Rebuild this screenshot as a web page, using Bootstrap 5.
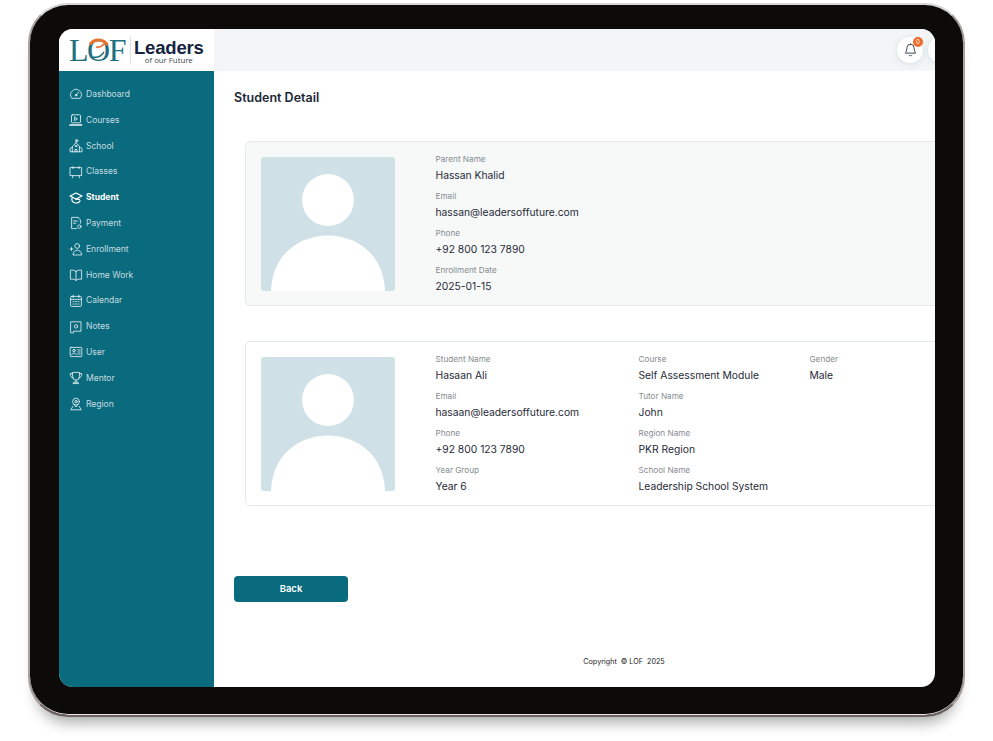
<!DOCTYPE html>
<html lang="en">
<head>
    <meta charset="UTF-8">
    <meta name="viewport" content="width=device-width, initial-scale=1.0">
    <title>Student Detail</title>
    <link rel="stylesheet" href="https://cdn.jsdelivr.net/npm/bootstrap@5.3.0/dist/css/bootstrap.min.css">
    <script defer src="https://cdn.jsdelivr.net/npm/bootstrap@5.3.0/dist/js/bootstrap.bundle.min.js"></script>
    <style>
        html, body { height: 100%; }
        body {
            background: #fff;
            font-family: Inter, "Liberation Sans", sans-serif;
            overflow: hidden;
        }
        .tablet {
            width: 937px;
            height: 714px;
            margin: 3px 0 0 28px;
            padding: 24px 28px 28px 29px;
            background: #0c0b09;
            border: 2px solid #a8a29e;
            border-top-color: #d6d6d6;
            border-bottom-color: #6f645f;
            border-radius: 40px;
            box-shadow: inset 0 -1px 0 #e9e6e4, 0 14px 14px -8px rgba(0, 0, 0, .32);
        }
        .screen {
            height: 658px;
            background: #fff;
            border-radius: 14px;
            overflow: hidden;
        }
        .brand-box { width: 155px; height: 42px; background: #fff; padding-left: 10px; }
        .top-strip { height: 42px; background: #f3f5f6; padding-right: 12px; overflow: hidden; }
        .lof-mark {
            font-family: "Liberation Serif", serif;
            font-size: 32px;
            line-height: 30px;
            color: #1f6f80;
            letter-spacing: -1.5px;
            width: 61px;
        }
        .lof-o { position: relative; display: inline-block; }
        .lof-o svg { position: absolute; left: 0; top: 0; width: 23px; height: 30px; }
        .brand-text { border-left: 1px solid #d9dee0; padding-left: 3px; height: 26px; }
        .brand-big { font-family: "Liberation Sans", sans-serif; font-size: 18.5px; line-height: 17px; font-weight: 700; color: #14233f; letter-spacing: -.2px; margin-top: 2px; }
        .brand-small { font-family: "Open Sans", sans-serif; font-size: 7.8px; line-height: 8px; color: #3b4650; text-align: center; }
        .bell-btn {
            position: relative;
            width: 26px;
            height: 26px;
            border-radius: 50%;
            background: #fff;
            box-shadow: 0 1px 6px rgba(10, 106, 126, .14);
        }
        .bell-dot {
            position: absolute;
            top: 0;
            right: 0;
            width: 10px;
            height: 10px;
            border-radius: 50%;
            background: #ee6c2b;
            color: #fff;
            font-size: 6px;
            line-height: 10px;
            text-align: center;
        }
        .avatar-edge {
            position: absolute;
            right: -19px;
            top: 8px;
            width: 26px;
            height: 26px;
            border-radius: 50%;
            background: #fff;
            box-shadow: 0 1px 6px rgba(10, 106, 126, .14);
        }
        .side-menu { width: 155px; height: 616px; background: #0a6a7e; padding-top: 10.5px; }
        .side-link {
            height: 25.8px;
            padding-left: 10px;
            gap: 3px;
            font-size: 8.5px;
            color: rgba(255, 255, 255, .78);
            text-decoration: none;
        }
        .side-link svg { width: 14px; height: 14px; flex: none; fill: none; stroke: rgba(255, 255, 255, .85); stroke-width: .9; stroke-linecap: round; stroke-linejoin: round; }
        .side-link.current { color: #fff; font-weight: 700; }
        .side-link.current svg { stroke: #fff; stroke-width: 1.2; }
        .main-pane { padding: 0 0 0 20px; min-width: 0; position: relative; }
        .page-title { font-size: 12.5px; line-height: 16px; font-weight: 600; color: #1c2735; margin: 19px 0 35px; }
        .info-card {
            width: 720px;
            height: 164.5px;
            margin: 0 0 35.5px 11px;
            padding: 14.5px 15px 15px 14.5px;
            border: 1px solid #e4e9ec;
            border-radius: 5px;
        }
        .info-card.tinted { background: #f7f9f9; }
        .photo { width: 134px; height: 134px; border-radius: 3px; background: #cfe1e6; overflow: hidden; flex: none; }
        .info-wrap { margin: -3.5px 0 0 41px; }
        .info-col-a { width: 203px; }
        .info-col-b { width: 171px; }
        .info-field { height: 37px; }
        .info-label { font-size: 8.2px; line-height: 13.5px; color: #858c91; }
        .info-value { font-size: 10.3px; line-height: 16px; color: #1f2a37; white-space: nowrap; }
        .back-btn {
            width: 114px;
            height: 26px;
            padding: 0;
            margin-top: 35px;
            background: #0a6a7e;
            border: 0;
            border-radius: 4px;
            color: #fff;
            font-size: 9.5px;
            font-weight: 600;
        }
        .copy-line {
            margin-top: 54px;
            padding-left: 79px;
            font-size: 7.2px;
            line-height: 12px;
            color: #222;
            text-align: center;
        }
    </style>
</head>
<body>
    <div class="tablet">
        <div class="screen">
            <div class="d-flex">
                <div class="brand-box d-flex align-items-center">
                    <div class="lof-mark">L<span class="lof-o">O<svg viewBox="0 0 23 30"><path d="M3 9.5A10.5 10.5 0 0 1 20.5 10" fill="none" stroke="#e8732f" stroke-width="3"/><path d="M9 12c3 .5 6-.5 8-3" fill="none" stroke="#e8732f" stroke-width="1.6"/><path d="M6 22c4 1 8-.5 11-5" fill="none" stroke="#1f6f80" stroke-width="1.4"/></svg></span>F</div>
                    <div class="brand-text">
                        <div class="brand-big">Leaders</div>
                        <div class="brand-small">of our Future</div>
                    </div>
                </div>
                <div class="top-strip flex-grow-1 d-flex align-items-center justify-content-end position-relative">
                    <div class="bell-btn d-flex align-items-center justify-content-center">
                        <svg width="13" height="14" viewBox="0 0 13 14" fill="none" stroke="#3d4852" stroke-width="1" stroke-linecap="round" stroke-linejoin="round"><path d="M6.5 1.2a3.6 3.6 0 0 0-3.6 3.6c0 3.4-1.2 4.6-1.7 5.3h10.6c-.5-.7-1.7-1.9-1.7-5.3a3.6 3.6 0 0 0-3.6-3.6Z"/><path d="M5.2 12.2c.5.9 2.1.9 2.6 0"/></svg>
                        <span class="bell-dot">0</span>
                    </div>
                    <div class="avatar-edge"></div>
                </div>
            </div>
            <div class="d-flex">
                <nav class="side-menu flex-shrink-0" id="sideMenu"></nav>
                <main class="main-pane flex-grow-1">
                    <h1 class="page-title">Student Detail</h1>

                    <div class="info-card tinted d-flex">
                        <svg class="photo" viewBox="0 0 134 134"><circle cx="67" cy="43" r="26" fill="#fff"/><path d="M10 134C12 60 122 60 124 134Z" fill="#fff"/></svg>
                        <div class="info-wrap">
                            <div class="info-field"><div class="info-label">Parent Name</div><div class="info-value">Hassan Khalid</div></div>
                            <div class="info-field"><div class="info-label">Email</div><div class="info-value">hassan@leadersoffuture.com</div></div>
                            <div class="info-field"><div class="info-label">Phone</div><div class="info-value">+92 800 123 7890</div></div>
                            <div class="info-field"><div class="info-label">Enrollment Date</div><div class="info-value">2025-01-15</div></div>
                        </div>
                    </div>

                    <div class="info-card d-flex">
                        <svg class="photo" viewBox="0 0 134 134"><circle cx="67" cy="43" r="26" fill="#fff"/><path d="M10 134C12 60 122 60 124 134Z" fill="#fff"/></svg>
                        <div class="info-wrap d-flex">
                            <div class="info-col-a">
                                <div class="info-field"><div class="info-label">Student Name</div><div class="info-value">Hasaan Ali</div></div>
                                <div class="info-field"><div class="info-label">Email</div><div class="info-value">hasaan@leadersoffuture.com</div></div>
                                <div class="info-field"><div class="info-label">Phone</div><div class="info-value">+92 800 123 7890</div></div>
                                <div class="info-field"><div class="info-label">Year Group</div><div class="info-value">Year 6</div></div>
                            </div>
                            <div class="info-col-b">
                                <div class="info-field"><div class="info-label">Course</div><div class="info-value">Self Assessment Module</div></div>
                                <div class="info-field"><div class="info-label">Tutor Name</div><div class="info-value">John</div></div>
                                <div class="info-field"><div class="info-label">Region Name</div><div class="info-value">PKR Region</div></div>
                                <div class="info-field"><div class="info-label">School Name</div><div class="info-value">Leadership School System</div></div>
                            </div>
                            <div>
                                <div class="info-field"><div class="info-label">Gender</div><div class="info-value">Male</div></div>
                            </div>
                        </div>
                    </div>

                    <button class="btn back-btn" type="button">Back</button>
                    <div class="copy-line">Copyright &nbsp;© LOF &nbsp;2025</div>
                </main>
            </div>
        </div>
    </div>

    <script>
        const menu = [
            ["Dashboard", '<path d="M2.6 11A5.4 5.4 0 1 1 11.4 11Z"/><path d="M7 8l2.4-2.6"/><circle cx="7" cy="8.2" r=".8"/>'],
            ["Courses", '<rect x="2.5" y="1.8" width="9" height="8" rx=".8"/><path d="M1 11.6h12v.8H1Z"/><path d="M5.8 4.2l2.6 1.6-2.6 1.6Z"/>'],
            ["School", '<path d="M7 1v2.6"/><path d="M7 1h2v1.2H7"/><path d="M3.6 7.4 7 3.6l3.4 3.8v5.4H3.6Z"/><path d="M3.6 8 1 9.6v3.2h2.6M10.4 8 13 9.6v3.2h-2.6"/><path d="M6 12.8v-2.4h2v2.4"/><circle cx="7" cy="7" r=".8"/>'],
            ["Classes", '<path d="M1.4 2.6h11.2v8H1.4Z"/><path d="M4 1.6v2M10 1.6v2M4 10.6l-.6 2.2M10 10.6l.6 2.2"/>'],
            ["Student", '<path d="M1 5 7 2l6 3-6 3Z"/><path d="M3.4 6.4C2 8.6 3 12 7 12c2.2 0 3.6-1 4-2.4"/><path d="M7 8.4h3.4"/>'],
            ["Payment", '<path d="M9 1.4H2.6v11.2h5"/><path d="M9 1.4l2.4 2.4v3.4"/><path d="M4.4 5h4M4.4 7.2h2.4"/><circle cx="10.4" cy="10.6" r="1.7"/>'],
            ["Enrollment", '<circle cx="8.2" cy="4" r="2.4"/><path d="M4 12.6c0-6 8.6-6 8.6 0Z"/><path d="M1 7h3M2.5 5.5v3"/>'],
            ["Home Work", '<path d="M7 3.4C5.6 2 3.6 2 1.4 2.2v9c2.2-.2 4.2-.2 5.6 1.2 1.4-1.4 3.4-1.4 5.6-1.2v-9C10.4 2 8.4 2 7 3.4Z"/><path d="M7 3.4v9"/>'],
            ["Calendar", '<rect x="1.6" y="2.4" width="10.8" height="10" rx="1"/><path d="M4.2 1.2v2.4M9.8 1.2v2.4M1.6 5.4h10.8"/><path d="M4 7.6h1M6.5 7.6h1M9 7.6h1M4 10h1M6.5 10h1M9 10h1"/>'],
            ["Notes", '<path d="M2 1.8h10v9.4H4.6v1.6H2Z"/><circle cx="7" cy="6.4" r="1.7"/>'],
            ["User", '<rect x="1.2" y="2.4" width="11.6" height="9.2" rx=".8"/><circle cx="5" cy="5.6" r="1.3"/><path d="M2.8 9.8c0-2.4 4.4-2.4 4.4 0M8.8 5h2.4M8.8 7h2.4M8.8 9h2.4"/>'],
            ["Mentor", '<path d="M3.6 1.4h6.8v4.4a3.4 3.4 0 0 1-6.8 0Z"/><path d="M3.6 2.6H1.2c0 2.6 1 4 2.8 4.4M10.4 2.6h2.4c0 2.6-1 4-2.8 4.4"/><path d="M7 9.2v2M4.4 12.6h5.2l-.6-1.4H5Z"/>'],
            ["Region", '<circle cx="7" cy="4.6" r="3.4"/><circle cx="7" cy="4.6" r="1.2"/><path d="M5 7.6 7 10l2-2.4"/><path d="M3.8 9.4 1.8 12.8h10.4l-2-3.4"/>']
        ];

        document.getElementById("sideMenu").innerHTML = menu.map(item => `
            <a href="#" class="side-link d-flex align-items-center ${item[0] === "Student" ? "current" : ""}">
                <svg viewBox="0 0 14 14">${item[1]}</svg><span>${item[0]}</span>
            </a>`).join("");
    </script>
</body>
</html>
